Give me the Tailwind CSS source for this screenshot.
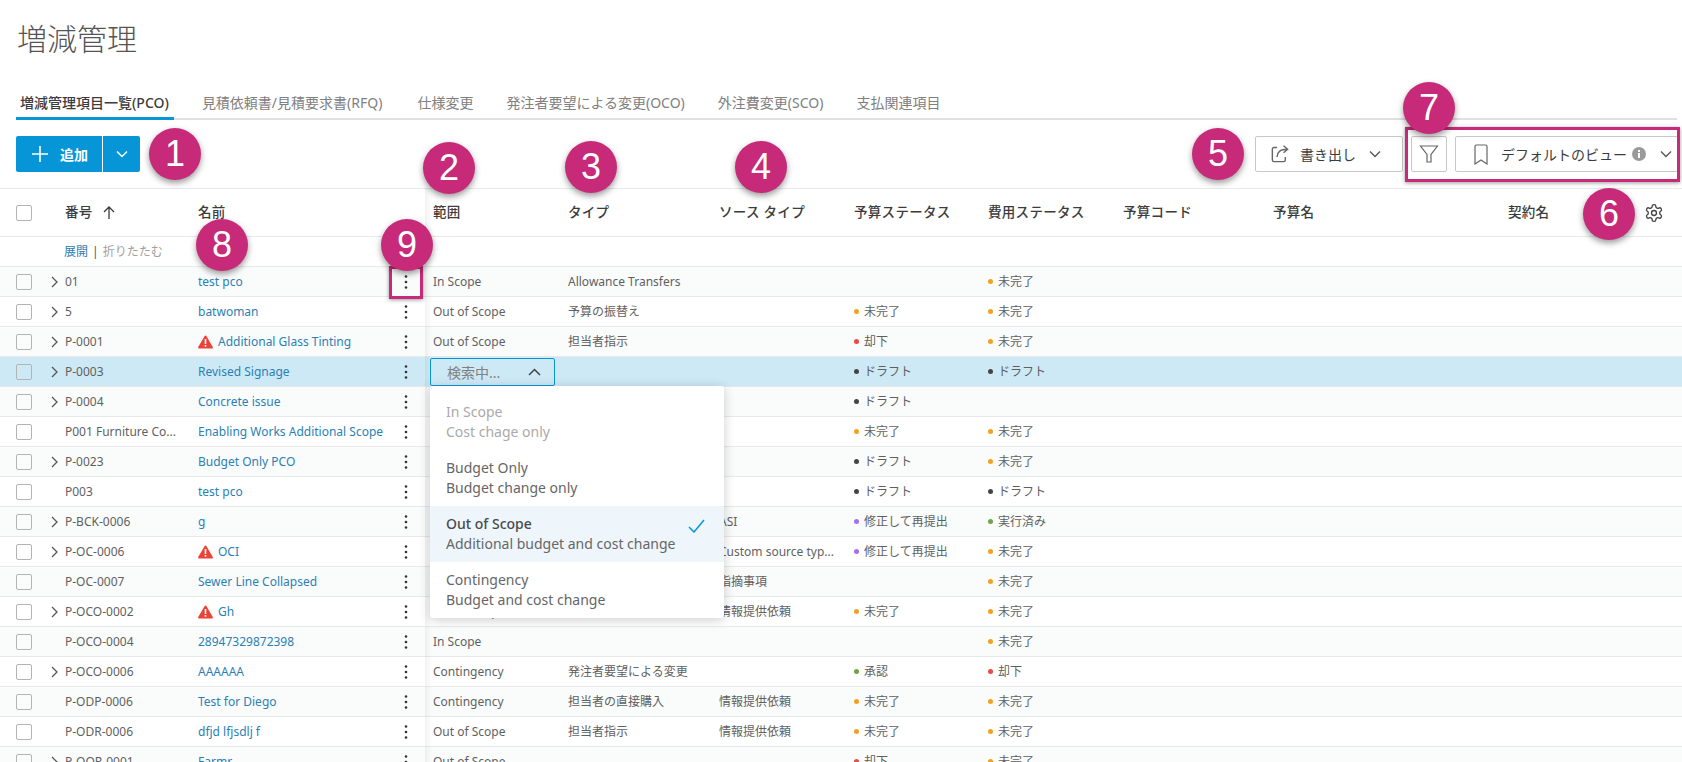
<!DOCTYPE html>
<html lang="ja">
<head>
  <meta charset="UTF-8">
  <title>増減管理</title>
  <script src="https://cdn.jsdelivr.net/npm/@tailwindcss/browser@4"></script>
</head>
<body class="bg-white">
<div class="relative w-[1682px] h-[762px] overflow-hidden font-['Noto_Sans','Noto_Sans_CJK_JP',sans-serif] text-[12px] text-[#5f5f5f]">

  <!-- page title -->
  <h1 class="pl-[17px] pt-[19px] h-[88px] text-[30px] leading-[40px] font-light text-[#555]">増減管理</h1>

  <!-- tabs -->
  <div class="mx-4 mr-[5px] h-[32px] flex border-b-2 border-[#dfe1e1] text-[14px] text-[#808080]">
    <div class="pl-[4px] pr-[5px] mr-[23px] h-[32px] pt-[2px] leading-[26px] border-b-[3px] border-[#0696d7] font-medium text-[#3c3c3c]">増減管理項目一覧(PCO)</div>
    <div class="px-[5px] mr-[25px] pt-[2px] leading-[26px]">見積依頼書/見積要求書(RFQ)</div>
    <div class="px-[5px] mr-[23px] pt-[2px] leading-[26px]">仕様変更</div>
    <div class="px-[5px] mr-[23px] pt-[2px] leading-[26px]">発注者要望による変更(OCO)</div>
    <div class="px-[5px] mr-[23px] pt-[2px] leading-[26px]">外注費変更(SCO)</div>
    <div class="px-[5px] pt-[2px] leading-[26px]">支払関連項目</div>
  </div>

  <!-- toolbar -->
  <div class="h-[68px] pt-4 pl-4 pr-1 flex justify-between items-start text-[14px]">
    <div class="flex h-9 w-[124px] rounded-[2px] bg-[#0696d7] text-white font-bold">
      <div class="w-[87px] flex items-center pl-4 gap-3 border-r border-white">
        <svg width="16" height="16" viewBox="0 0 16 16" fill="none" stroke="white" stroke-width="1.6"><path d="M8 0v16M0 8h16"/></svg>
        <span>追加</span>
      </div>
      <div class="flex-1 flex items-center justify-center">
        <svg width="12" height="8" viewBox="0 0 12 8" fill="none" stroke="white" stroke-width="1.4"><path d="M1 1.5l5 5 5-5"/></svg>
      </div>
    </div>
    <div class="flex gap-2 text-[#3c3c3c]">
      <div class="w-[148px] h-9 flex items-center pl-[14px] border border-[#c8c8c8] rounded-[2px]">
        <svg width="20" height="20" viewBox="0 0 17 17" fill="none" stroke="#666" stroke-width="1.2"><path d="M6 3H3.500A1.500 1.500 0 0 0 2 4.500v9A1.500 1.500 0 0 0 3.500 15h8a1.500 1.500 0 0 0 1.500-1.500V11"/><path d="M6 11c0-4 2.500-6.500 9-6.500M11.500 1.500 15 4.500l-3.500 3"/></svg>
        <span class="ml-[10px]">書き出し</span>
        <svg class="ml-[13px]" width="12" height="8" viewBox="0 0 12 8" fill="none" stroke="#555" stroke-width="1.3"><path d="M1 1.500l5 5 5-5"/></svg>
      </div>
      <div class="w-9 h-9 flex items-center justify-center border border-[#c8c8c8] rounded-[2px]">
        <svg width="20" height="20" viewBox="0 0 20 20" fill="none" stroke="#666" stroke-width="1.2"><path d="M1.500 2h17l-6.500 8.500V18H8v-7.500z"/></svg>
      </div>
      <div class="w-[223px] h-9 flex items-center pl-[18px] border border-[#c8c8c8] rounded-[2px]">
        <svg width="14" height="21" viewBox="0 0 14 21" fill="none" stroke="#666" stroke-width="1.2"><path d="M1 2.500A1.500 1.500 0 0 1 2.500 1h9A1.500 1.500 0 0 1 13 2.500V20l-6-4-6 4z"/></svg>
        <span class="ml-[13px]">デフォルトのビュー</span>
        <svg class="ml-[5px]" width="14" height="14" viewBox="0 0 14 14"><circle cx="7" cy="7" r="7" fill="#9a9a9a"/><rect x="6" y="6" width="2" height="5" fill="white"/><rect x="6" y="3" width="2" height="2" fill="white"/></svg>
        <svg class="ml-[14px]" width="12" height="8" viewBox="0 0 12 8" fill="none" stroke="#555" stroke-width="1.3"><path d="M1 1.500l5 5 5-5"/></svg>
      </div>
    </div>
  </div>

  <!-- table header -->
  <div class="h-[49px] grid grid-cols-[48px_17px_133px_192px_32px_11px_135px_151px_135px_134px_135px_150px_235px_1fr] items-center border-y border-[#e8eaea] text-[13.500px] tracking-[0.3px] font-medium text-[#3c3c3c]">
    <div class="pl-4"><div class="w-4 h-4 border border-[#b4b4b4] rounded-[2px] bg-white"></div></div>
    <div></div>
    <div class="flex items-center gap-[10px]">番号
      <svg width="12" height="13" viewBox="0 0 12 13" fill="none" stroke="#3c3c3c" stroke-width="1.300"><path d="M6 13V1M1 6l5-5 5 5"/></svg>
    </div>
    <div>名前</div>
    <div></div><div></div>
    <div>範囲</div>
    <div>タイプ</div>
    <div>ソース タイプ</div>
    <div>予算ステータス</div>
    <div>費用ステータス</div>
    <div>予算コード</div>
    <div>予算名</div>
    <div class="flex items-center justify-between pr-[18px]">契約名
      <svg width="20" height="20" viewBox="0 0 24 24" fill="none" stroke="#444" stroke-width="1.600"><path d="M12.220 2h-.44a2 2 0 0 0-2 2v.18a2 2 0 0 1-1 1.730l-.43.25a2 2 0 0 1-2 0l-.15-.08a2 2 0 0 0-2.730.73l-.22.38a2 2 0 0 0 .73 2.730l.15.1a2 2 0 0 1 1 1.720v.51a2 2 0 0 1-1 1.740l-.15.09a2 2 0 0 0-.73 2.730l.22.38a2 2 0 0 0 2.730.73l.15-.08a2 2 0 0 1 2 0l.43.25a2 2 0 0 1 1 1.730V20a2 2 0 0 0 2 2h.44a2 2 0 0 0 2-2v-.18a2 2 0 0 1 1-1.730l.43-.25a2 2 0 0 1 2 0l.15.08a2 2 0 0 0 2.730-.73l.22-.39a2 2 0 0 0-.73-2.730l-.15-.08a2 2 0 0 1-1-1.740v-.5a2 2 0 0 1 1-1.740l.15-.09a2 2 0 0 0 .73-2.730l-.22-.38a2 2 0 0 0-2.730-.73l-.15.08a2 2 0 0 1-2 0l-.43-.25a2 2 0 0 1-1-1.730V4a2 2 0 0 0-2-2z"/><circle cx="12" cy="12" r="3"/></svg>
    </div>
  </div>

  <!-- expand / collapse row -->
  <div class="h-[30px] pl-[64px] flex items-center border-b border-[#e8eaea] text-[12px] text-[#a0a0a0]">
    <span class="text-[#2b7fb5]">展開</span>
    <span class="mx-[4px] text-[#555]">|</span>
    <span>折りたたむ</span>
  </div>

  <div id="rows"></div>

  <!-- shadow of the frozen columns -->
  <div class="absolute left-[425px] top-[188px] bottom-0 w-[7px] bg-gradient-to-r from-black/5 to-transparent"></div>

  <!-- scope dropdown -->
  <div class="absolute left-[430px] top-[358px] w-[125px] h-[28px] pl-4 pr-[13px] flex items-center justify-between border border-[#0696d7] rounded-[2px] bg-[#cde9f5] text-[14px] text-[#808080]">
    <span>検索中...</span>
    <svg width="13" height="8" viewBox="0 0 13 8" fill="none" stroke="#444" stroke-width="1.500"><path d="M1 7l5.500-5.500L12 7"/></svg>
  </div>
  <div class="absolute left-[430px] top-[386px] w-[294px] h-[232px] pt-2 bg-white rounded-[3px] shadow-[0_2px_12px_rgba(0,0,0,0.2)] text-[14px] leading-[20px] text-[#666]">
    <div class="h-[56px] px-4 pt-2 text-[#aaa]"><div>In Scope</div><div>Cost chage only</div></div>
    <div class="h-[56px] px-4 pt-2"><div>Budget Only</div><div>Budget change only</div></div>
    <div class="relative h-[56px] px-4 pt-2 bg-[#eef6fc]">
      <div class="font-medium text-[#4a4a4a]">Out of Scope</div><div>Additional budget and cost change</div>
      <svg class="absolute left-[258px] top-[13px]" width="17" height="14" viewBox="0 0 17 14" fill="none" stroke="#0696d7" stroke-width="1.500"><path d="M1 8l5 5L16 1"/></svg>
    </div>
    <div class="h-[56px] px-4 pt-2"><div>Contingency</div><div>Budget and cost change</div></div>
  </div>

  <!-- callouts -->
  <div class="absolute left-[389px] top-[266px] w-[34px] h-[33px] border-[3px] border-[#c62a78] shadow-[0_1px_4px_rgba(0,0,0,0.4)]"></div>
  <div class="absolute left-[1405px] top-[127px] w-[275px] h-[55px] border-[3px] border-[#c62a78] shadow-[0_1px_4px_rgba(0,0,0,0.4)]"></div>
  <div class="absolute left-[149px] top-[128px] w-[52px] h-[52px] rounded-full bg-[#c62a78] shadow-[0_3px_6px_rgba(0,0,0,0.4)] flex items-center justify-center font-['Liberation_Sans',sans-serif] text-[36px] text-white">1</div>
  <div class="absolute left-[423px] top-[142px] w-[52px] h-[52px] rounded-full bg-[#c62a78] shadow-[0_3px_6px_rgba(0,0,0,0.4)] flex items-center justify-center font-['Liberation_Sans',sans-serif] text-[36px] text-white">2</div>
  <div class="absolute left-[565px] top-[141px] w-[52px] h-[52px] rounded-full bg-[#c62a78] shadow-[0_3px_6px_rgba(0,0,0,0.4)] flex items-center justify-center font-['Liberation_Sans',sans-serif] text-[36px] text-white">3</div>
  <div class="absolute left-[735px] top-[141px] w-[52px] h-[52px] rounded-full bg-[#c62a78] shadow-[0_3px_6px_rgba(0,0,0,0.4)] flex items-center justify-center font-['Liberation_Sans',sans-serif] text-[36px] text-white">4</div>
  <div class="absolute left-[1192px] top-[128px] w-[52px] h-[52px] rounded-full bg-[#c62a78] shadow-[0_3px_6px_rgba(0,0,0,0.4)] flex items-center justify-center font-['Liberation_Sans',sans-serif] text-[36px] text-white">5</div>
  <div class="absolute left-[1583px] top-[188px] w-[52px] h-[52px] rounded-full bg-[#c62a78] shadow-[0_3px_6px_rgba(0,0,0,0.4)] flex items-center justify-center font-['Liberation_Sans',sans-serif] text-[36px] text-white">6</div>
  <div class="absolute left-[1403px] top-[82px] w-[52px] h-[52px] rounded-full bg-[#c62a78] shadow-[0_3px_6px_rgba(0,0,0,0.4)] flex items-center justify-center font-['Liberation_Sans',sans-serif] text-[36px] text-white">7</div>
  <div class="absolute left-[196px] top-[219px] w-[52px] h-[52px] rounded-full bg-[#c62a78] shadow-[0_3px_6px_rgba(0,0,0,0.4)] flex items-center justify-center font-['Liberation_Sans',sans-serif] text-[36px] text-white">8</div>
  <div class="absolute left-[381px] top-[219px] w-[52px] h-[52px] rounded-full bg-[#c62a78] shadow-[0_3px_6px_rgba(0,0,0,0.4)] flex items-center justify-center font-['Liberation_Sans',sans-serif] text-[36px] text-white">9</div>
</div>

<script>
  // status label -> dot colour
  const dots = {
    '未完了': 'bg-[#f5a11f]',
    '却下': 'bg-[#ec4a41]',
    'ドラフト': 'bg-[#444]',
    '修正して再提出': 'bg-[#a66ef0]',
    '実行済み': 'bg-[#6da644]',
    '承認': 'bg-[#6da644]'
  };

  // [number, name, warning, expandable, scope, type, source, budget status, cost status]
  const data = [
    ['01', 'test pco', 0, 1, 'In Scope', 'Allowance Transfers', '', '', '未完了'],
    ['5', 'batwoman', 0, 1, 'Out of Scope', '予算の振替え', '', '未完了', '未完了'],
    ['P-0001', 'Additional Glass Tinting', 1, 1, 'Out of Scope', '担当者指示', '', '却下', '未完了'],
    ['P-0003', 'Revised Signage', 0, 1, '', '', '', 'ドラフト', 'ドラフト'],
    ['P-0004', 'Concrete issue', 0, 1, '', '', '', 'ドラフト', ''],
    ['P001 Furniture Co...', 'Enabling Works Additional Scope', 0, 0, '', '', '', '未完了', '未完了'],
    ['P-0023', 'Budget Only PCO', 0, 1, '', '', '', 'ドラフト', '未完了'],
    ['P003', 'test pco', 0, 0, '', '', '', 'ドラフト', 'ドラフト'],
    ['P-BCK-0006', 'g', 0, 1, '', '', 'ASI', '修正して再提出', '実行済み'],
    ['P-OC-0006', 'OCI', 1, 1, '', '', 'Custom source typ...', '修正して再提出', '未完了'],
    ['P-OC-0007', 'Sewer Line Collapsed', 0, 0, '', '', '指摘事項', '', '未完了'],
    ['P-OCO-0002', 'Gh', 1, 1, 'Out of Scope', '', '情報提供依頼', '未完了', '未完了'],
    ['P-OCO-0004', '28947329872398', 0, 0, 'In Scope', '', '', '', '未完了'],
    ['P-OCO-0006', 'AAAAAA', 0, 1, 'Contingency', '発注者要望による変更', '', '承認', '却下'],
    ['P-ODP-0006', 'Test for Diego', 0, 0, 'Contingency', '担当者の直接購入', '情報提供依頼', '未完了', '未完了'],
    ['P-ODR-0006', 'dfjd lfjsdlj f', 0, 0, 'Out of Scope', '担当者指示', '情報提供依頼', '未完了', '未完了'],
    ['P-OOR-0001', 'Farmr', 0, 1, 'Out of Scope', '', '', '却下', '未完了']
  ];

  const chevron = '<svg class="ml-[3px]" width="7" height="12" viewBox="0 0 7 12" fill="none" stroke="#555" stroke-width="1.300"><path d="M1 1l5 5-5 5"/></svg>';
  const warning = '<svg class="mr-[5px] shrink-0" width="15" height="14" viewBox="0 0 15 14"><path d="M7.500 .5a1 1 0 0 1 .87.5l6.400 11a1 1 0 0 1-.87 1.500H1.100a1 1 0 0 1-.87-1.500L6.630 1a1 1 0 0 1 .87-.5z" fill="#ea4438"/><rect x="6.700" y="4" width="1.600" height="5" fill="white"/><rect x="6.700" y="10" width="1.600" height="1.700" fill="white"/></svg>';
  const kebab = '<svg width="4" height="14" viewBox="0 0 4 14" fill="#333"><circle cx="2" cy="1.500" r="1.300"/><circle cx="2" cy="7" r="1.300"/><circle cx="2" cy="12.500" r="1.300"/></svg>';

  function status(label) {
    if (!label) return '<div></div>';
    return `<div class="flex items-center gap-[5px]"><span class="w-[5px] h-[5px] rounded-full ${dots[label]}"></span>${label}</div>`;
  }

  document.getElementById('rows').innerHTML = data.map((r, i) => {
    const bg = i === 3 ? 'bg-[#cde9f5]' : i % 2 === 0 ? 'bg-[#fafcfc]' : 'bg-white';
    return `<div class="h-[30px] grid grid-cols-[48px_17px_133px_192px_32px_11px_135px_151px_135px_134px_135px_150px_235px_1fr] items-center border-b border-[#e8eaea] ${bg}">
      <div class="pl-4"><div class="w-4 h-4 border border-[#b4b4b4] rounded-[2px]"></div></div>
      <div>${r[3] ? chevron : ''}</div>
      <div class="whitespace-nowrap">${r[0]}</div>
      <div class="flex items-center text-[#2b7fb5] whitespace-nowrap">${r[2] ? warning : ''}${r[1]}</div>
      <div class="flex justify-center">${kebab}</div>
      <div></div>
      <div>${r[4]}</div>
      <div class="whitespace-nowrap">${r[5]}</div>
      <div class="whitespace-nowrap">${r[6]}</div>
      ${status(r[7])}
      ${status(r[8])}
    </div>`;
  }).join('');
</script>
</body>
</html>
